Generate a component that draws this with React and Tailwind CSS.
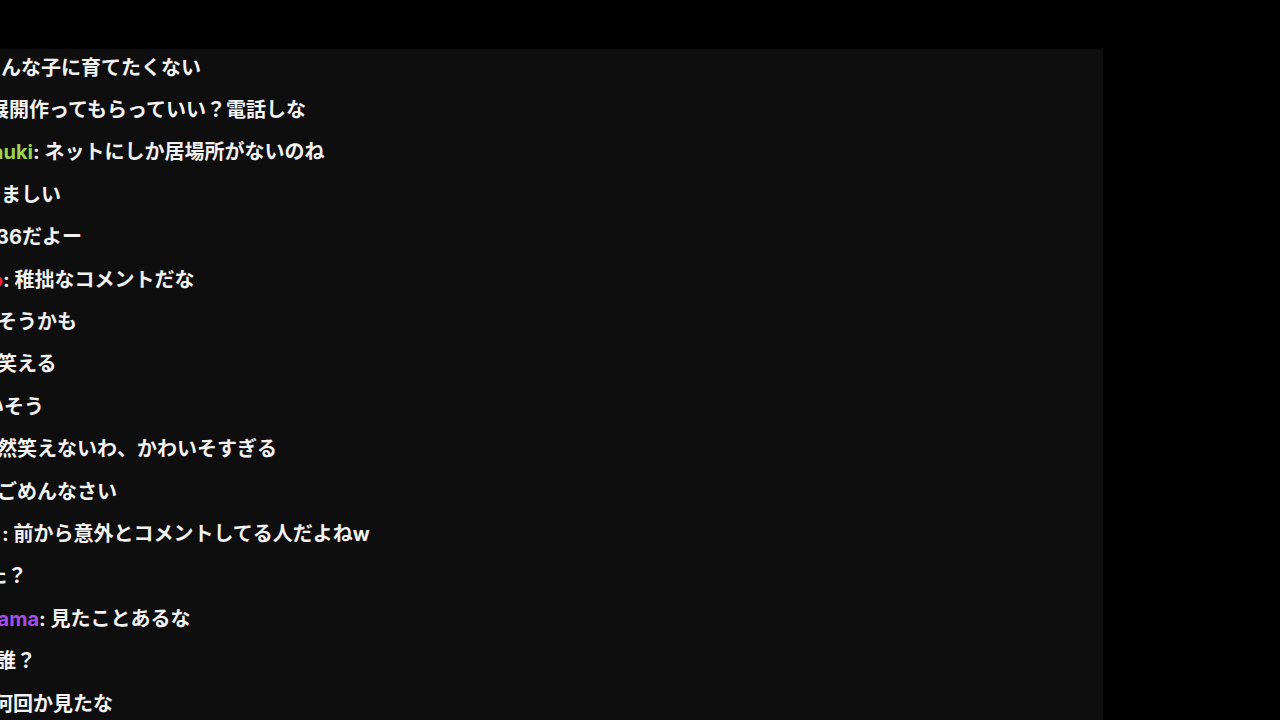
import React from "react";

const lines = [
  { x: "w-[1px]", pre: "こ", text: "んな子に育てたくない" },
  { x: "w-[9px]", pre: "展", text: "開作ってもらっていい？電話しな" },
  { x: "w-[33px]", pre: "tanuki", preClass: "text-[#9fd352]", text: ": ネットにしか居場所がないのね" },
  { x: "w-[1px]", pre: "や", text: "ましい" },
  { x: "w-[0px]", neg: "-ml-[4px]", pre: "", text: "36だよー" },
  { x: "w-[3px]", pre: "kuro", preClass: "text-[#ff1f3d]", text: ": 稚拙なコメントだな" },
  { x: "w-[0px]", neg: "-ml-[3px]", pre: "", text: "そうかも" },
  { x: "w-[0px]", neg: "-ml-[3px]", pre: "", text: "笑える" },
  { x: "w-[0px]", neg: "-ml-[16px]", pre: "", text: "いそう" },
  { x: "w-[0px]", neg: "-ml-[3px]", pre: "", text: "然笑えないわ、かわいそすぎる" },
  { x: "w-[0px]", neg: "-ml-[3px]", pre: "", text: "ごめんなさい" },
  { x: "w-[2px]", pre: "", text: ": 前から意外とコメントしてる人だよねw" },
  { x: "w-[0px]", neg: "-ml-[13px]", pre: "", text: "た？" },
  { x: "w-[39px]", pre: "kayama", preClass: "text-[#a24ee6]", text: ": 見たことあるな" },
  { x: "w-[0px]", neg: "-ml-[4px]", pre: "", text: "誰？" },
  { x: "w-[0px]", neg: "-ml-[7px]", pre: "", text: "何回か見たな" },
];

function Line({ l }) {
  return (
    <div className={`flex h-[42.4px] items-center whitespace-nowrap ${l.neg || ""}`}>
      <div className={`flex shrink-0 justify-end ${l.x}`}>
        <span className={`shrink-0 ${l.preClass || ""}`}>{l.pre}</span>
      </div>
      <span className="shrink-0">{l.text}</span>
    </div>
  );
}

export default function App() {
  return (
    <div className="flex h-screen w-full flex-col overflow-hidden bg-black font-['Inter','Noto_Sans_CJK_JP',sans-serif] text-[20px] font-bold text-[#f2f2f2]">
      <div className="h-[49px] shrink-0" />
      <div className="flex min-h-0 flex-1">
        <div className="w-[1103px] shrink-0 overflow-hidden bg-[#0e0e0e]">
          <div className="-mt-[2.5px] flex flex-col">
            {lines.map((l, i) => (
              <Line key={i} l={l} />
            ))}
          </div>
        </div>
      </div>
    </div>
  );
}
